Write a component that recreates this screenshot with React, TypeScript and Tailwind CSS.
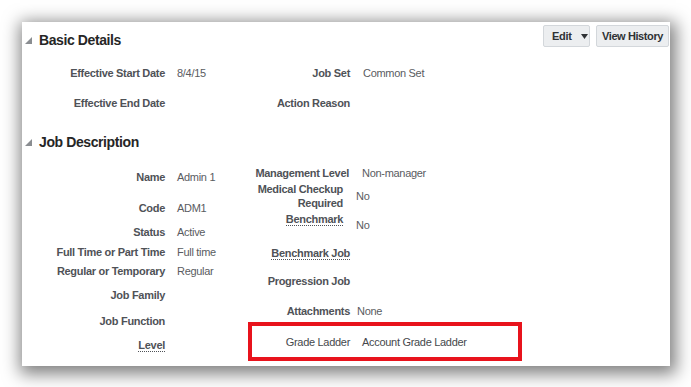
import React from 'react';

const font = { fontFamily: '"Liberation Sans", Arial, sans-serif' };

function Caret() {
  return (
    <svg width="7" height="7" viewBox="0 0 7 7" className="shrink-0">
      <polygon points="7,0 7,7 0,7" fill="#8a8d91" />
    </svg>
  );
}

function SectionTitle({ children }: { children: React.ReactNode }) {
  return (
    <div className="flex items-center gap-[7px] pl-[3px] h-[20px]">
      <Caret />
      <h2 className="text-[14px] leading-[20px] font-bold tracking-[-0.4px] text-[#262626]">{children}</h2>
    </div>
  );
}

const label = 'text-[11px] leading-[14px] font-bold tracking-[-0.3px] text-[#4f5257] text-right';
const value = 'text-[11px] leading-[14px] tracking-[-0.3px] text-[#5a5c5f] whitespace-nowrap';
const dotted = 'inline-block leading-[12px] border-b border-dotted border-[#4f5257]';

// left column row: label box right edge at 143, value 12px after
function LeftRow({ name, val, mt, link }: { name: string; val?: string; mt: string; link?: boolean }) {
  return (
    <div className={`flex items-start ${mt}`}>
      <div className={`w-[143px] ${label}`}>
        {link ? <span className={dotted}>{name}</span> : name}
      </div>
      <div className={`ml-[12px] ${value}`}>{val}</div>
    </div>
  );
}

export default function App() {
  return (
    <div className="w-[691px] h-[387px] bg-white pt-[22px] pl-[22px] overflow-hidden" style={font}>
      <div className="w-[648px] h-[344px] bg-white shadow-[2px_4px_16px_4px_rgba(0,0,0,0.5)]">
        {/* Basic Details header */}
        <div className="flex items-start justify-between pt-[3px] pr-[1px]">
          <div className="mt-[5px]">
            <SectionTitle>Basic Details</SectionTitle>
          </div>
          <div className="flex gap-[6px]">
            <button className="h-[22px] w-[47px] flex items-center pl-[8px] gap-[9px] bg-[#eceef0] border border-[#d3d7db] rounded-[2px] text-[11px] font-bold tracking-[-0.3px] text-[#2f3235]">
              Edit
              <svg width="7" height="5" viewBox="0 0 7 5">
                <polygon points="0,0 7,0 3.5,5" fill="#2f3235" />
              </svg>
            </button>
            <button className="h-[22px] w-[73px] flex items-center justify-center bg-[#eceef0] border border-[#d3d7db] rounded-[2px] text-[11px] font-bold tracking-[-0.4px] text-[#2f3235]">
              View History
            </button>
          </div>
        </div>

        {/* Basic Details fields */}
        <div className="mt-[8px]">
          {[
            ['Effective Start Date', '8/4/15', 'Job Set', 'Common Set'],
            ['Effective End Date', '', 'Action Reason', ''],
          ].map((r) => (
            <div key={r[0]} className="flex items-center h-[30px]">
              <div className={`w-[143px] ${label}`}>{r[0]}</div>
              <div className={`ml-[12px] w-[45px] ${value}`}>{r[1]}</div>
              <div className={`w-[128px] ${label}`}>{r[2]}</div>
              <div className={`ml-[13px] ${value}`}>{r[3]}</div>
            </div>
          ))}
        </div>

        {/* Job Description */}
        <div className="mt-[14px]">
          <SectionTitle>Job Description</SectionTitle>
        </div>

        <div className="flex">
          <div className="w-[200px]">
            <LeftRow name="Name" val="Admin 1" mt="mt-[18px]" />
            <LeftRow name="Code" val="ADM1" mt="mt-[17px]" />
            <LeftRow name="Status" val="Active" mt="mt-[10px]" />
            <LeftRow name="Full Time or Part Time" val="Full time" mt="mt-[6px]" />
            <LeftRow name="Regular or Temporary" val="Regular" mt="mt-[5px]" />
            <LeftRow name="Job Family" mt="mt-[10px]" />
            <LeftRow name="Job Function" mt="mt-[12px]" />
            <LeftRow name="Level" mt="mt-[10px]" link />
          </div>

          <div className="flex-1">
            <div className="flex items-start mt-[14px]">
              <div className={`w-[127px] ${label}`}>Management Level</div>
              <div className={`ml-[13px] ${value}`}>Non-manager</div>
            </div>
            <div className="flex items-center mt-[2px]">
              <div className={`w-[121px] ${label} leading-[13px]`}>
                Medical Checkup
                <br />
                Required
              </div>
              <div className={`ml-[13px] ${value}`}>No</div>
            </div>
            <div className="flex items-start mt-[2px]">
              <div className={`w-[121px] ${label}`}>
                <span className={dotted}>Benchmark</span>
              </div>
              <div className={`ml-[13px] mt-[6px] ${value}`}>No</div>
            </div>
            <div className="flex items-start mt-[14px]">
              <div className={`w-[128px] ${label}`}>
                <span className={dotted}>Benchmark Job</span>
              </div>
            </div>
            <div className="flex items-start mt-[14px]">
              <div className={`w-[128px] ${label}`}>Progression Job</div>
            </div>
            <div className="flex items-start mt-[16px]">
              <div className={`w-[128px] ${label}`}>Attachments</div>
              <div className={`ml-[7px] ${value}`}>None</div>
            </div>
            <div className="mt-[4px] ml-[26px] w-[274px] h-[39px] border-4 border-[#e8131c] flex items-center">
              <div className={`w-[98px] ${label} font-normal text-[#45484c]`}>Grade Ladder</div>
              <div className={`ml-[12px] ${value} text-[#45484c]`}>Account Grade Ladder</div>
            </div>
          </div>
        </div>
      </div>
    </div>
  );
}
